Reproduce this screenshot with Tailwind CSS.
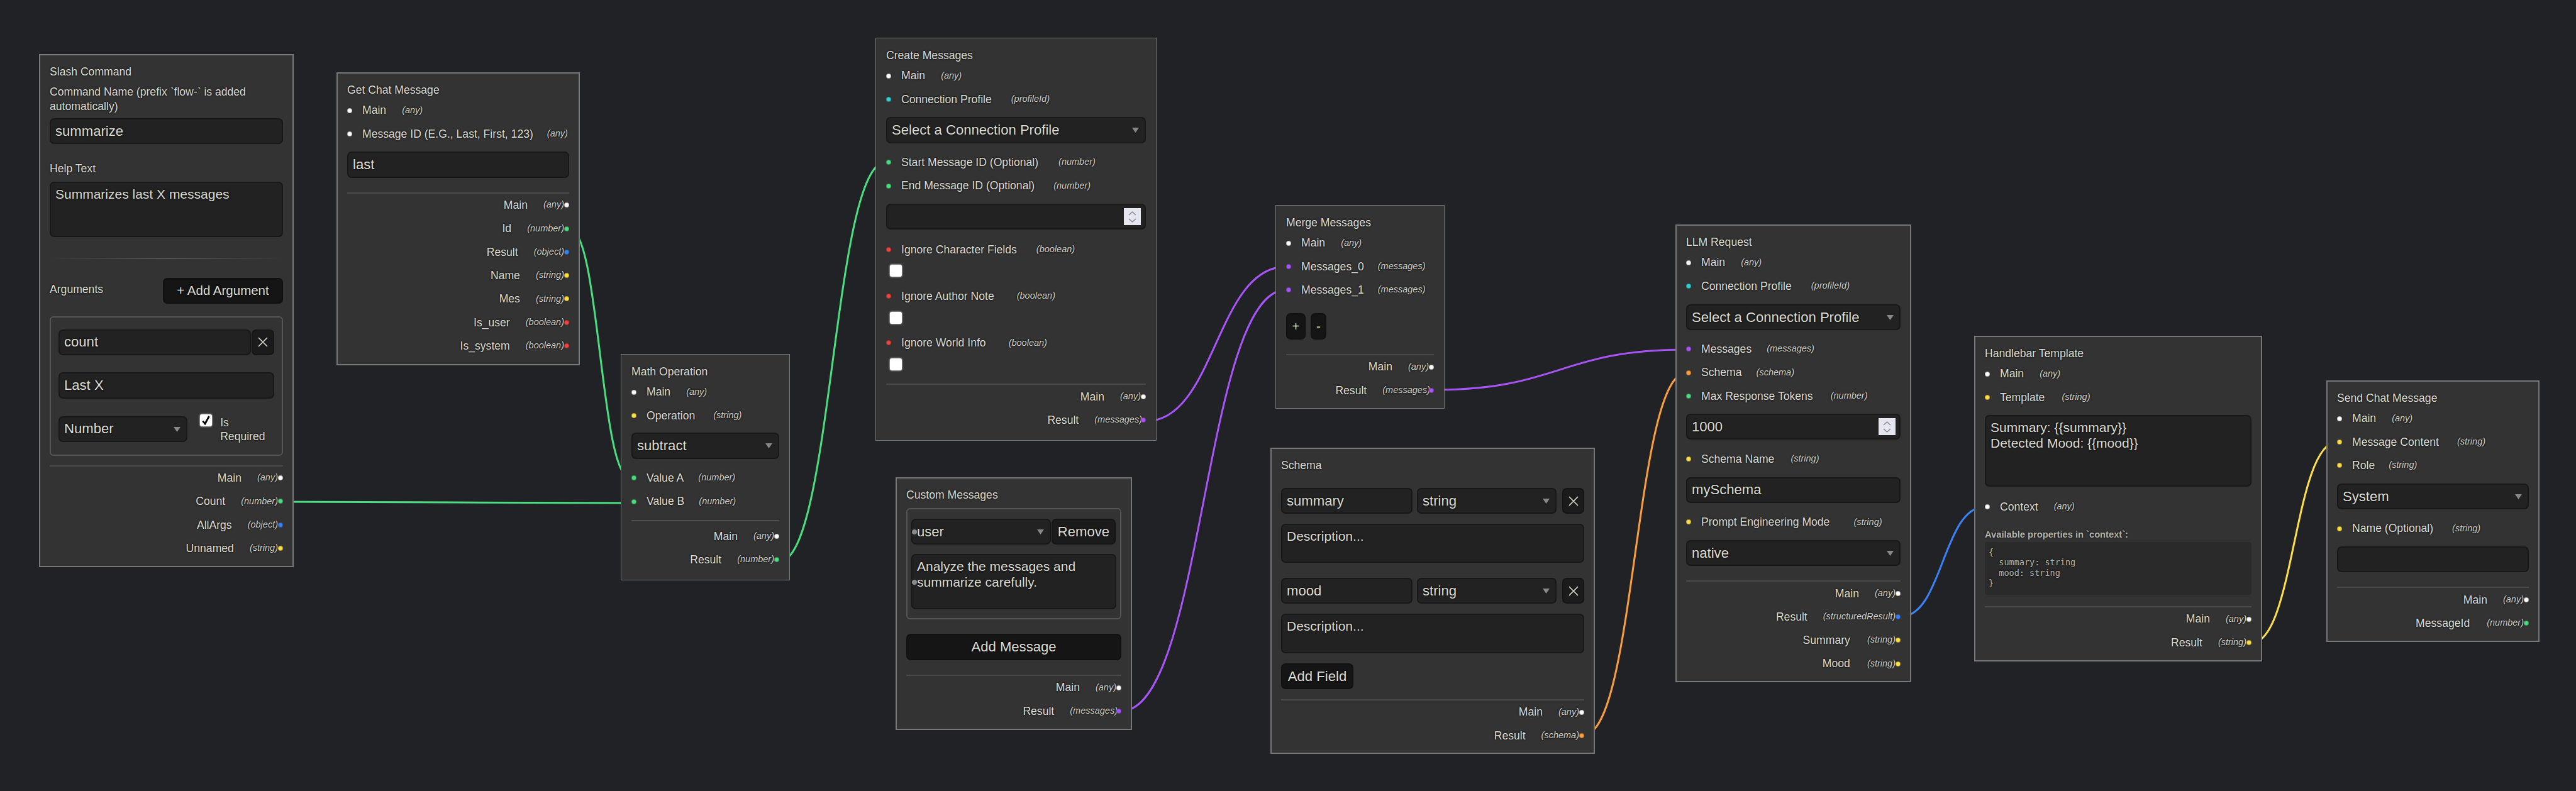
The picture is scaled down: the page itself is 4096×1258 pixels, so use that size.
<!DOCTYPE html>
<html lang="en">
<head>
    <meta charset="UTF-8">
    <title>Flow Editor</title>
    <script src="https://cdn.jsdelivr.net/npm/@tailwindcss/browser@4"></script>
</head>
<body class="overflow-hidden">
<div class="relative w-[4096px] h-[1258px] overflow-hidden bg-[#202226] text-[#dcdcd2] text-[17.6px] whitespace-nowrap font-['Liberation_Sans',sans-serif] [text-shadow:0_0_3px_#000] [&_:is(input,textarea,select,button)]:[text-shadow:0_0_3px_#000]">

    <!-- Edges -->
    <svg class="absolute inset-0 w-[4096px] h-[1258px]" viewBox="0 0 4096 1258" fill="none" stroke-width="3">
        <path stroke="#4ade80" d="M450 798 C726 798 726 800 1003 800"/>
        <path stroke="#4ade80" d="M905 363 C954 363 954 762 1003 762"/>
        <path stroke="#4ade80" d="M1239 893 C1324 893 1324 257 1409 257"/>
        <path stroke="#a855f7" d="M1822 670 C1933 670 1933 424 2045 424"/>
        <path stroke="#a855f7" d="M1783 1131 C1914 1131 1914 461 2045 461"/>
        <path stroke="#a855f7" d="M2280 620 C2480 620 2480 556 2681 556"/>
        <path stroke="#fb9f3c" d="M2519 1168 C2600 1168 2600 593 2681 593"/>
        <path stroke="#3b82f6" d="M3022 981 C3089 981 3089 806 3156 806"/>
        <path stroke="#fde047" d="M3581 1022 C3648 1022 3648 703 3716 703"/>
    </svg>

    <!-- Slash Command -->
    <div class="absolute left-[62px] top-[86px] w-[405px] h-[816px] bg-[#333] border-2 border-[#777] px-[15px] pt-[14px]">
        <div class="h-[24px] leading-[24px]">Slash Command</div>
        <label class="block mt-[9px] leading-[22.5px] whitespace-normal">Command Name (prefix `flow-` is added automatically)</label>
        <input value="summarize" class="block w-full h-[41px] mt-[8px] px-[7px] bg-[#222] border-2 border-[#181818] rounded-[7px] text-[22.1px]">
        <label class="block mt-[28px] leading-[22.5px]">Help Text</label>
        <textarea class="block w-full h-[88px] mt-[9px] px-[7px] py-[5px] bg-[#222] border-2 border-[#181818] rounded-[7px] text-[21px] leading-[25px] resize-none">Summarizes last X messages</textarea>
        <div class="h-[2px] mt-[33px] bg-gradient-to-r from-transparent via-[#555] to-transparent"></div>
        <div class="flex items-center justify-between mt-[30px]">
            <span class="-mt-[4px]">Arguments</span>
            <button class="w-[191px] h-[41px] bg-[#151515] border-2 border-[#111] rounded-[7px] text-[20.5px]">+ Add Argument</button>
        </div>
        <div class="mt-[20px] px-[12px] pt-[19px] pb-[18px] border-2 border-[#555] rounded-[6px]">
            <div class="flex gap-[1px]">
                <input value="count" class="w-[307px] h-[41px] px-[7px] bg-[#222] border-2 border-[#181818] rounded-[7px] text-[22.1px]">
                <button class="flex items-center justify-center w-[36px] h-[41px] bg-[#1b1b1b] border-2 border-[#151515] rounded-[7px]">
                    <svg class="w-[16px] h-[16px]" viewBox="0 0 16 16" stroke="#dcdcd2" stroke-width="1.6"><path d="M1 1 L15 15 M15 1 L1 15"/></svg>
                </button>
            </div>
            <input value="Last X" class="block w-full h-[42px] mt-[27px] px-[7px] bg-[#222] border-2 border-[#181818] rounded-[7px] text-[22.1px]">
            <div class="flex items-start mt-[28px]">
                <div class="relative w-[215px]">
                    <select class="block w-full h-[41px] px-[7px] appearance-none bg-[#222] border-2 border-[#181818] rounded-[7px] text-[22.1px]"><option>Number</option></select>
                    <svg class="absolute right-[11px] top-[17px] w-[11px] h-[8px]" viewBox="0 0 11 8" fill="#888"><path d="M0 0 H11 L5.5 8 Z"/></svg>
                </div>
                <span class="relative w-[19px] h-[19px] ml-[20px] -mt-[3px] shrink-0 bg-white rounded-[3px] shadow-[0_0_3px_#fff]">
                    <svg class="absolute left-[3px] top-[2px] w-[13px] h-[15px]" viewBox="0 0 13 15" fill="none" stroke="#000" stroke-width="2.8"><path d="M1.5 8.500 L5 13 L11.500 1"/></svg>
                </span>
                <label class="ml-[13px] -mt-[1px] leading-[22px] whitespace-normal">Is Required</label>
            </div>
        </div>
        <div class="mt-[15px] border-t-2 border-[#4a4a4a]"></div>
        <div class="flex items-center justify-end h-[37.3px]"><span class="mr-[25px]">Main</span><em class="text-[14.5px] text-[#cfcfc6]">(any)</em><span class="w-[8px] h-[8px] shrink-0 rounded-full border border-black/30 bg-white"></span></div>
        <div class="flex items-center justify-end h-[37.3px]"><span class="mr-[25px]">Count</span><em class="text-[14.5px] text-[#cfcfc6]">(number)</em><span class="w-[8px] h-[8px] shrink-0 rounded-full border border-black/30 bg-[#4ade80]"></span></div>
        <div class="flex items-center justify-end h-[37.3px]"><span class="mr-[25px]">AllArgs</span><em class="text-[14.5px] text-[#cfcfc6]">(object)</em><span class="w-[8px] h-[8px] shrink-0 rounded-full border border-black/30 bg-[#3b82f6]"></span></div>
        <div class="flex items-center justify-end h-[37.3px]"><span class="mr-[25px]">Unnamed</span><em class="text-[14.5px] text-[#cfcfc6]">(string)</em><span class="w-[8px] h-[8px] shrink-0 rounded-full border border-black/30 bg-[#fde047]"></span></div>
    </div>

    <!-- Get Chat Message -->
    <div class="absolute left-[535px] top-[115px] w-[387px] h-[466px] bg-[#333] border-2 border-[#777] px-[15px] pt-[14px]">
        <div class="h-[24px] mb-[2px] leading-[24px]">Get Chat Message</div>
        <div class="flex items-center h-[37.3px]"><span class="w-[8px] h-[8px] mr-[16px] shrink-0 rounded-full border border-black/30 bg-white"></span><span class="mr-[25px]">Main</span><em class="text-[14.5px] text-[#cfcfc6]">(any)</em></div>
        <div class="flex items-center h-[37.3px]"><span class="w-[8px] h-[8px] mr-[16px] shrink-0 rounded-full border border-black/30 bg-white"></span><span class="mr-[22px]">Message ID (E.G., Last, First, 123)</span><em class="text-[14.5px] text-[#cfcfc6]">(any)</em></div>
        <input value="last" class="block w-full h-[42px] mt-[9px] px-[7px] bg-[#222] border-2 border-[#181818] rounded-[7px] text-[22.1px]">
        <div class="mt-[23px] border-t-2 border-[#4a4a4a]"></div>
        <div class="flex items-center justify-end h-[37.3px]"><span class="mr-[25px]">Main</span><em class="text-[14.5px] text-[#cfcfc6]">(any)</em><span class="w-[8px] h-[8px] shrink-0 rounded-full border border-black/30 bg-white"></span></div>
        <div class="flex items-center justify-end h-[37.3px]"><span class="mr-[25px]">Id</span><em class="text-[14.5px] text-[#cfcfc6]">(number)</em><span class="w-[8px] h-[8px] shrink-0 rounded-full border border-black/30 bg-[#4ade80]"></span></div>
        <div class="flex items-center justify-end h-[37.3px]"><span class="mr-[25px]">Result</span><em class="text-[14.5px] text-[#cfcfc6]">(object)</em><span class="w-[8px] h-[8px] shrink-0 rounded-full border border-black/30 bg-[#3b82f6]"></span></div>
        <div class="flex items-center justify-end h-[37.3px]"><span class="mr-[25px]">Name</span><em class="text-[14.5px] text-[#cfcfc6]">(string)</em><span class="w-[8px] h-[8px] shrink-0 rounded-full border border-black/30 bg-[#fde047]"></span></div>
        <div class="flex items-center justify-end h-[37.3px]"><span class="mr-[25px]">Mes</span><em class="text-[14.5px] text-[#cfcfc6]">(string)</em><span class="w-[8px] h-[8px] shrink-0 rounded-full border border-black/30 bg-[#fde047]"></span></div>
        <div class="flex items-center justify-end h-[37.3px]"><span class="mr-[25px]">Is_user</span><em class="text-[14.5px] text-[#cfcfc6]">(boolean)</em><span class="w-[8px] h-[8px] shrink-0 rounded-full border border-black/30 bg-[#ef4444]"></span></div>
        <div class="flex items-center justify-end h-[37.3px]"><span class="mr-[25px]">Is_system</span><em class="text-[14.5px] text-[#cfcfc6]">(boolean)</em><span class="w-[8px] h-[8px] shrink-0 rounded-full border border-black/30 bg-[#ef4444]"></span></div>
    </div>

    <!-- Math Operation -->
    <div class="absolute left-[987px] top-[563px] w-[269px] h-[360px] bg-[#333] border border-[#777] px-[16px] pt-[15px]">
        <div class="h-[24px] mb-[2px] leading-[24px]">Math Operation</div>
        <div class="flex items-center h-[37.3px]"><span class="w-[8px] h-[8px] mr-[16px] shrink-0 rounded-full border border-black/30 bg-white"></span><span class="mr-[25px]">Main</span><em class="text-[14.5px] text-[#cfcfc6]">(any)</em></div>
        <div class="flex items-center h-[37.3px]"><span class="w-[8px] h-[8px] mr-[16px] shrink-0 rounded-full border border-black/30 bg-[#fde047]"></span><span class="mr-[29px]">Operation</span><em class="text-[14.5px] text-[#cfcfc6]">(string)</em></div>
        <div class="relative mt-[8px]">
            <select class="block w-full h-[42px] px-[7px] appearance-none bg-[#222] border-2 border-[#181818] rounded-[7px] text-[22.1px]"><option>subtract</option></select>
            <svg class="absolute right-[11px] top-[17px] w-[11px] h-[8px]" viewBox="0 0 11 8" fill="#888"><path d="M0 0 H11 L5.5 8 Z"/></svg>
        </div>
        <div class="flex items-center h-[37.3px] mt-[12px]"><span class="w-[8px] h-[8px] mr-[16px] shrink-0 rounded-full border border-black/30 bg-[#4ade80]"></span><span class="mr-[23px]">Value A</span><em class="text-[14.5px] text-[#cfcfc6]">(number)</em></div>
        <div class="flex items-center h-[37.3px]"><span class="w-[8px] h-[8px] mr-[16px] shrink-0 rounded-full border border-black/30 bg-[#4ade80]"></span><span class="mr-[23px]">Value B</span><em class="text-[14.5px] text-[#cfcfc6]">(number)</em></div>
        <div class="mt-[11px] mb-[6px] border-t border-[#5a5a5a]"></div>
        <div class="flex items-center justify-end h-[37.3px]"><span class="mr-[25px]">Main</span><em class="text-[14.5px] text-[#cfcfc6]">(any)</em><span class="w-[8px] h-[8px] shrink-0 rounded-full border border-black/30 bg-white"></span></div>
        <div class="flex items-center justify-end h-[37.3px]"><span class="mr-[25px]">Result</span><em class="text-[14.5px] text-[#cfcfc6]">(number)</em><span class="w-[8px] h-[8px] shrink-0 rounded-full border border-black/30 bg-[#4ade80]"></span></div>
    </div>

    <!-- Create Messages -->
    <div class="absolute left-[1392px] top-[60px] w-[447px] h-[641px] bg-[#333] border border-[#777] px-[16px] pt-[15px]">
        <div class="h-[24px] mb-[2px] leading-[24px]">Create Messages</div>
        <div class="flex items-center h-[37.3px]"><span class="w-[8px] h-[8px] mr-[16px] shrink-0 rounded-full border border-black/30 bg-white"></span><span class="mr-[25px]">Main</span><em class="text-[14.5px] text-[#cfcfc6]">(any)</em></div>
        <div class="flex items-center h-[37.3px]"><span class="w-[8px] h-[8px] mr-[16px] shrink-0 rounded-full border border-black/30 bg-[#2dd4d4]"></span><span class="mr-[31px]">Connection Profile</span><em class="text-[14.5px] text-[#cfcfc6]">(profileId)</em></div>
        <div class="relative mt-[9px]">
            <select class="block w-full h-[42px] px-[7px] appearance-none bg-[#222] border-2 border-[#181818] rounded-[7px] text-[22.1px]"><option>Select a Connection Profile</option></select>
            <svg class="absolute right-[11px] top-[17px] w-[11px] h-[8px]" viewBox="0 0 11 8" fill="#888"><path d="M0 0 H11 L5.5 8 Z"/></svg>
        </div>
        <div class="flex items-center h-[37.3px] mt-[12px]"><span class="w-[8px] h-[8px] mr-[16px] shrink-0 rounded-full border border-black/30 bg-[#4ade80]"></span><span class="mr-[32px]">Start Message ID (Optional)</span><em class="text-[14.5px] text-[#cfcfc6]">(number)</em></div>
        <div class="flex items-center h-[37.3px]"><span class="w-[8px] h-[8px] mr-[16px] shrink-0 rounded-full border border-black/30 bg-[#4ade80]"></span><span class="mr-[30px]">End Message ID (Optional)</span><em class="text-[14.5px] text-[#cfcfc6]">(number)</em></div>
        <div class="relative mt-[10px]">
            <input class="block w-full h-[41px] px-[7px] bg-[#222] border-2 border-[#181818] rounded-[7px] text-[22.1px]">
            <svg class="absolute right-[8px] top-[7px] w-[27px] h-[27px] bg-[#e6e6ef]" viewBox="0 0 27 27" fill="none" stroke="#8a8a92" stroke-width="1.6"><path d="M8 11 L13.500 6 L19 11 M8 17 L13.500 22 L19 17"/></svg>
        </div>
        <div class="flex items-center h-[37.3px] mt-[13px]"><span class="w-[8px] h-[8px] mr-[16px] shrink-0 rounded-full border border-black/30 bg-[#ef4444]"></span><span class="mr-[31px]">Ignore Character Fields</span><em class="text-[14.5px] text-[#cfcfc6]">(boolean)</em></div>
        <input type="checkbox" class="block w-[19px] h-[19px] mt-[6px] ml-[6px] appearance-none bg-white rounded-[3px] shadow-[0_0_3px_#fff]">
        <div class="flex items-center h-[37.3px] mt-[12px]"><span class="w-[8px] h-[8px] mr-[16px] shrink-0 rounded-full border border-black/30 bg-[#ef4444]"></span><span class="mr-[36px]">Ignore Author Note</span><em class="text-[14.5px] text-[#cfcfc6]">(boolean)</em></div>
        <input type="checkbox" class="block w-[19px] h-[19px] mt-[6px] ml-[6px] appearance-none bg-white rounded-[3px] shadow-[0_0_3px_#fff]">
        <div class="flex items-center h-[37.3px] mt-[12px]"><span class="w-[8px] h-[8px] mr-[16px] shrink-0 rounded-full border border-black/30 bg-[#ef4444]"></span><span class="mr-[36px]">Ignore World Info</span><em class="text-[14.5px] text-[#cfcfc6]">(boolean)</em></div>
        <input type="checkbox" class="block w-[19px] h-[19px] mt-[6px] ml-[6px] appearance-none bg-white rounded-[3px] shadow-[0_0_3px_#fff]">
        <div class="mt-[21px] border-t-2 border-[#4a4a4a]"></div>
        <div class="flex items-center justify-end h-[37.3px]"><span class="mr-[25px]">Main</span><em class="text-[14.5px] text-[#cfcfc6]">(any)</em><span class="w-[8px] h-[8px] shrink-0 rounded-full border border-black/30 bg-white"></span></div>
        <div class="flex items-center justify-end h-[37.3px]"><span class="mr-[25px]">Result</span><em class="text-[14.5px] text-[#cfcfc6]">(messages)</em><span class="w-[8px] h-[8px] -ml-[2px] shrink-0 rounded-full border border-black/30 bg-[#a855f7]"></span></div>
    </div>

    <!-- Custom Messages -->
    <div class="absolute left-[1424px] top-[759px] w-[376px] h-[402px] bg-[#333] border-2 border-[#777] px-[15px] pt-[14px]">
        <div class="h-[24px] leading-[24px]">Custom Messages</div>
        <div class="mt-[9px] px-[6px] pt-[15px] pb-[14px] border-2 border-[#555] rounded-[6px]">
            <div class="flex gap-[1px]">
                <div class="relative w-[222px]">
                    <select class="block w-full h-[41px] px-[7px] appearance-none bg-[#222] border-2 border-[#181818] rounded-[7px] text-[22.1px]"><option>user</option></select>
                    <svg class="absolute right-[11px] top-[17px] w-[11px] h-[8px]" viewBox="0 0 11 8" fill="#888"><path d="M0 0 H11 L5.5 8 Z"/></svg>
                    <span class="absolute left-[1px] top-[17px] w-[8px] h-[8px] rounded-full bg-[#8a8a8a]"></span>
                </div>
                <button class="w-[102px] h-[41px] bg-[#1b1b1b] border-2 border-[#151515] rounded-[7px] text-[22.1px]">Remove</button>
            </div>
            <div class="relative mt-[15px]">
                <textarea class="block w-full h-[88px] px-[7px] py-[5px] bg-[#222] border-2 border-[#181818] rounded-[7px] text-[21px] leading-[25px] resize-none">Analyze the messages and summarize carefully.</textarea>
                <span class="absolute left-[1px] top-[41px] w-[8px] h-[8px] rounded-full bg-[#8a8a8a]"></span>
            </div>
        </div>
        <button class="block w-full h-[42px] mt-[23px] bg-[#151515] border-2 border-[#111] rounded-[7px] text-[22.1px]">Add Message</button>
        <div class="mt-[23px] border-t-2 border-[#4a4a4a]"></div>
        <div class="flex items-center justify-end h-[37.3px]"><span class="mr-[25px]">Main</span><em class="text-[14.5px] text-[#cfcfc6]">(any)</em><span class="w-[8px] h-[8px] shrink-0 rounded-full border border-black/30 bg-white"></span></div>
        <div class="flex items-center justify-end h-[37.3px]"><span class="mr-[25px]">Result</span><em class="text-[14.5px] text-[#cfcfc6]">(messages)</em><span class="w-[8px] h-[8px] -ml-[2px] shrink-0 rounded-full border border-black/30 bg-[#a855f7]"></span></div>
    </div>

    <!-- Merge Messages -->
    <div class="absolute left-[2028px] top-[326px] w-[269px] h-[324px] bg-[#333] border border-[#777] px-[16px] pt-[15px]">
        <div class="h-[24px] mb-[2px] leading-[24px]">Merge Messages</div>
        <div class="flex items-center h-[37.3px]"><span class="w-[8px] h-[8px] mr-[16px] shrink-0 rounded-full border border-black/30 bg-white"></span><span class="mr-[25px]">Main</span><em class="text-[14.5px] text-[#cfcfc6]">(any)</em></div>
        <div class="flex items-center h-[37.3px]"><span class="w-[8px] h-[8px] mr-[16px] shrink-0 rounded-full border border-black/30 bg-[#a855f7]"></span><span class="mr-[22px]">Messages_0</span><em class="text-[14.5px] text-[#cfcfc6]">(messages)</em></div>
        <div class="flex items-center h-[37.3px]"><span class="w-[8px] h-[8px] mr-[16px] shrink-0 rounded-full border border-black/30 bg-[#a855f7]"></span><span class="mr-[22px]">Messages_1</span><em class="text-[14.5px] text-[#cfcfc6]">(messages)</em></div>
        <div class="flex gap-[8px] mt-[18px]">
            <button class="w-[31px] h-[42px] bg-[#151515] border-2 border-[#111] rounded-[7px] text-[20.5px]">+</button>
            <button class="w-[25px] h-[42px] bg-[#151515] border-2 border-[#111] rounded-[7px] text-[20.5px]">-</button>
        </div>
        <div class="mt-[23px] border-t-2 border-[#4a4a4a]"></div>
        <div class="flex items-center justify-end h-[37.3px]"><span class="mr-[25px]">Main</span><em class="text-[14.5px] text-[#cfcfc6]">(any)</em><span class="w-[8px] h-[8px] shrink-0 rounded-full border border-black/30 bg-white"></span></div>
        <div class="flex items-center justify-end h-[37.3px]"><span class="mr-[25px]">Result</span><em class="text-[14.5px] text-[#cfcfc6]">(messages)</em><span class="w-[8px] h-[8px] -ml-[2px] shrink-0 rounded-full border border-black/30 bg-[#a855f7]"></span></div>
    </div>

    <!-- Schema -->
    <div class="absolute left-[2020px] top-[712px] w-[516px] h-[487px] bg-[#333] border-2 border-[#777] px-[15px] pt-[14px]">
        <div class="h-[24px] leading-[24px]">Schema</div>
        <div class="flex mt-[24px]">
            <input value="summary" class="w-[209px] h-[41px] px-[7px] bg-[#222] border-2 border-[#181818] rounded-[7px] text-[22.1px]">
            <div class="relative w-[222px] ml-[7px]">
                <select class="block w-full h-[41px] px-[7px] appearance-none bg-[#222] border-2 border-[#181818] rounded-[7px] text-[22.1px]"><option>string</option></select>
                <svg class="absolute right-[11px] top-[17px] w-[11px] h-[8px]" viewBox="0 0 11 8" fill="#888"><path d="M0 0 H11 L5.5 8 Z"/></svg>
            </div>
            <button class="flex items-center justify-center w-[35px] h-[41px] ml-[9px] bg-[#1b1b1b] border-2 border-[#151515] rounded-[7px]">
                <svg class="w-[16px] h-[16px]" viewBox="0 0 16 16" stroke="#dcdcd2" stroke-width="1.6"><path d="M1 1 L15 15 M15 1 L1 15"/></svg>
            </button>
        </div>
        <textarea class="block w-full h-[62px] mt-[16px] px-[7px] py-[5px] bg-[#222] border-2 border-[#181818] rounded-[7px] text-[21px] leading-[25px] resize-none placeholder:text-[#dcdcd2]" placeholder="Description..."></textarea>
        <div class="flex mt-[24px]">
            <input value="mood" class="w-[209px] h-[41px] px-[7px] bg-[#222] border-2 border-[#181818] rounded-[7px] text-[22.1px]">
            <div class="relative w-[222px] ml-[7px]">
                <select class="block w-full h-[41px] px-[7px] appearance-none bg-[#222] border-2 border-[#181818] rounded-[7px] text-[22.1px]"><option>string</option></select>
                <svg class="absolute right-[11px] top-[17px] w-[11px] h-[8px]" viewBox="0 0 11 8" fill="#888"><path d="M0 0 H11 L5.5 8 Z"/></svg>
            </div>
            <button class="flex items-center justify-center w-[35px] h-[41px] ml-[9px] bg-[#1b1b1b] border-2 border-[#151515] rounded-[7px]">
                <svg class="w-[16px] h-[16px]" viewBox="0 0 16 16" stroke="#dcdcd2" stroke-width="1.6"><path d="M1 1 L15 15 M15 1 L1 15"/></svg>
            </button>
        </div>
        <textarea class="block w-full h-[63px] mt-[16px] px-[7px] py-[5px] bg-[#222] border-2 border-[#181818] rounded-[7px] text-[21px] leading-[25px] resize-none placeholder:text-[#dcdcd2]" placeholder="Description..."></textarea>
        <button class="block w-[115px] h-[41px] mt-[16px] bg-[#151515] border-2 border-[#111] rounded-[7px] text-[22.1px]">Add Field</button>
        <div class="mt-[16px] border-t-2 border-[#4a4a4a]"></div>
        <div class="flex items-center justify-end h-[37.3px]"><span class="mr-[25px]">Main</span><em class="text-[14.5px] text-[#cfcfc6]">(any)</em><span class="w-[8px] h-[8px] shrink-0 rounded-full border border-black/30 bg-white"></span></div>
        <div class="flex items-center justify-end h-[37.3px]"><span class="mr-[25px]">Result</span><em class="text-[14.5px] text-[#cfcfc6]">(schema)</em><span class="w-[8px] h-[8px] shrink-0 rounded-full border border-black/30 bg-[#fb9f3c]"></span></div>
    </div>

    <!-- LLM Request -->
    <div class="absolute left-[2664px] top-[357px] w-[375px] h-[728px] bg-[#333] border-2 border-[#777] px-[15px] pt-[14px]">
        <div class="h-[24px] mb-[2px] leading-[24px]">LLM Request</div>
        <div class="flex items-center h-[37.3px]"><span class="w-[8px] h-[8px] mr-[16px] shrink-0 rounded-full border border-black/30 bg-white"></span><span class="mr-[25px]">Main</span><em class="text-[14.5px] text-[#cfcfc6]">(any)</em></div>
        <div class="flex items-center h-[37.3px]"><span class="w-[8px] h-[8px] mr-[16px] shrink-0 rounded-full border border-black/30 bg-[#2dd4d4]"></span><span class="mr-[31px]">Connection Profile</span><em class="text-[14.5px] text-[#cfcfc6]">(profileId)</em></div>
        <div class="relative mt-[10px]">
            <select class="block w-full h-[41px] px-[7px] appearance-none bg-[#222] border-2 border-[#181818] rounded-[7px] text-[22.1px]"><option>Select a Connection Profile</option></select>
            <svg class="absolute right-[11px] top-[17px] w-[11px] h-[8px]" viewBox="0 0 11 8" fill="#888"><path d="M0 0 H11 L5.5 8 Z"/></svg>
        </div>
        <div class="flex items-center h-[37.3px] mt-[12px]"><span class="w-[8px] h-[8px] mr-[16px] shrink-0 rounded-full border border-black/30 bg-[#a855f7]"></span><span class="mr-[24px]">Messages</span><em class="text-[14.5px] text-[#cfcfc6]">(messages)</em></div>
        <div class="flex items-center h-[37.3px]"><span class="w-[8px] h-[8px] mr-[16px] shrink-0 rounded-full border border-black/30 bg-[#fb9f3c]"></span><span class="mr-[23px]">Schema</span><em class="text-[14.5px] text-[#cfcfc6]">(schema)</em></div>
        <div class="flex items-center h-[37.3px]"><span class="w-[8px] h-[8px] mr-[16px] shrink-0 rounded-full border border-black/30 bg-[#4ade80]"></span><span class="mr-[28px]">Max Response Tokens</span><em class="text-[14.5px] text-[#cfcfc6]">(number)</em></div>
        <div class="relative mt-[10px]">
            <input value="1000" class="block w-full h-[41px] px-[7px] bg-[#222] border-2 border-[#181818] rounded-[7px] text-[22.1px]">
            <svg class="absolute right-[8px] top-[7px] w-[27px] h-[27px] bg-[#e6e6ef]" viewBox="0 0 27 27" fill="none" stroke="#8a8a92" stroke-width="1.6"><path d="M8 11 L13.500 6 L19 11 M8 17 L13.500 22 L19 17"/></svg>
        </div>
        <div class="flex items-center h-[37.3px] mt-[12px]"><span class="w-[8px] h-[8px] mr-[16px] shrink-0 rounded-full border border-black/30 bg-[#fde047]"></span><span class="mr-[26px]">Schema Name</span><em class="text-[14.5px] text-[#cfcfc6]">(string)</em></div>
        <input value="mySchema" class="block w-full h-[41px] mt-[10px] px-[7px] bg-[#222] border-2 border-[#181818] rounded-[7px] text-[22.1px]">
        <div class="flex items-center h-[37.3px] mt-[12px]"><span class="w-[8px] h-[8px] mr-[16px] shrink-0 rounded-full border border-black/30 bg-[#fde047]"></span><span class="mr-[38px]">Prompt Engineering Mode</span><em class="text-[14.5px] text-[#cfcfc6]">(string)</em></div>
        <div class="relative mt-[10px]">
            <select class="block w-full h-[41px] px-[7px] appearance-none bg-[#222] border-2 border-[#181818] rounded-[7px] text-[22.1px]"><option>native</option></select>
            <svg class="absolute right-[11px] top-[17px] w-[11px] h-[8px]" viewBox="0 0 11 8" fill="#888"><path d="M0 0 H11 L5.5 8 Z"/></svg>
        </div>
        <div class="mt-[23px] border-t-2 border-[#4a4a4a]"></div>
        <div class="flex items-center justify-end h-[37.3px]"><span class="mr-[25px]">Main</span><em class="text-[14.5px] text-[#cfcfc6]">(any)</em><span class="w-[8px] h-[8px] shrink-0 rounded-full border border-black/30 bg-white"></span></div>
        <div class="flex items-center justify-end h-[37.3px]"><span class="mr-[25px]">Result</span><em class="text-[14.5px] text-[#cfcfc6]">(structuredResult)</em><span class="w-[8px] h-[8px] shrink-0 rounded-full border border-black/30 bg-[#3b82f6]"></span></div>
        <div class="flex items-center justify-end h-[37.3px]"><span class="mr-[27px]">Summary</span><em class="text-[14.5px] text-[#cfcfc6]">(string)</em><span class="w-[8px] h-[8px] shrink-0 rounded-full border border-black/30 bg-[#fde047]"></span></div>
        <div class="flex items-center justify-end h-[37.3px]"><span class="mr-[27px]">Mood</span><em class="text-[14.5px] text-[#cfcfc6]">(string)</em><span class="w-[8px] h-[8px] shrink-0 rounded-full border border-black/30 bg-[#fde047]"></span></div>
    </div>

    <!-- Handlebar Template -->
    <div class="absolute left-[3139px] top-[534px] w-[458px] h-[518px] bg-[#333] border-2 border-[#777] px-[15px] pt-[14px]">
        <div class="h-[24px] mb-[2px] leading-[24px]">Handlebar Template</div>
        <div class="flex items-center h-[37.3px]"><span class="w-[8px] h-[8px] mr-[16px] shrink-0 rounded-full border border-black/30 bg-white"></span><span class="mr-[25px]">Main</span><em class="text-[14.5px] text-[#cfcfc6]">(any)</em></div>
        <div class="flex items-center h-[37.3px]"><span class="w-[8px] h-[8px] mr-[16px] shrink-0 rounded-full border border-black/30 bg-[#fde047]"></span><span class="mr-[27px]">Template</span><em class="text-[14.5px] text-[#cfcfc6]">(string)</em></div>
        <textarea class="block w-full h-[114px] mt-[9px] px-[7px] py-[5px] bg-[#222] border-2 border-[#181818] rounded-[7px] text-[21px] leading-[25px] resize-none">Summary: {{summary}}
Detected Mood: {{mood}}</textarea>
        <div class="flex items-center h-[37.3px] mt-[14px]"><span class="w-[8px] h-[8px] mr-[16px] shrink-0 rounded-full border border-black/30 bg-white"></span><span class="mr-[25px]">Context</span><em class="text-[14.5px] text-[#cfcfc6]">(any)</em></div>
        <div class="mt-[16px] h-[18px] leading-[18px] text-[14.7px] font-bold text-[#b5b5ad]">Available properties in `context`:</div>
        <pre class="h-[84px] mt-[3px] px-[6px] pt-[8px] bg-[#2a2a2a] rounded-[4px] text-[13.5px] leading-[16.5px] text-[#b5b5ad] font-['DejaVu_Sans_Mono',monospace]">{
  summary: string
  mood: string
}</pre>
        <div class="mt-[18px] border-t-2 border-[#4a4a4a]"></div>
        <div class="flex items-center justify-end h-[37.3px]"><span class="mr-[25px]">Main</span><em class="text-[14.5px] text-[#cfcfc6]">(any)</em><span class="w-[8px] h-[8px] shrink-0 rounded-full border border-black/30 bg-white"></span></div>
        <div class="flex items-center justify-end h-[37.3px]"><span class="mr-[25px]">Result</span><em class="text-[14.5px] text-[#cfcfc6]">(string)</em><span class="w-[8px] h-[8px] shrink-0 rounded-full border border-black/30 bg-[#fde047]"></span></div>
    </div>

    <!-- Send Chat Message -->
    <div class="absolute left-[3699px] top-[605px] w-[339px] h-[416px] bg-[#333] border-2 border-[#777] px-[15px] pt-[14px]">
        <div class="h-[24px] mb-[2px] leading-[24px]">Send Chat Message</div>
        <div class="flex items-center h-[37.3px]"><span class="w-[8px] h-[8px] mr-[16px] shrink-0 rounded-full border border-black/30 bg-white"></span><span class="mr-[25px]">Main</span><em class="text-[14.5px] text-[#cfcfc6]">(any)</em></div>
        <div class="flex items-center h-[37.3px]"><span class="w-[8px] h-[8px] mr-[16px] shrink-0 rounded-full border border-black/30 bg-[#fde047]"></span><span class="mr-[29px]">Message Content</span><em class="text-[14.5px] text-[#cfcfc6]">(string)</em></div>
        <div class="flex items-center h-[37.3px]"><span class="w-[8px] h-[8px] mr-[16px] shrink-0 rounded-full border border-black/30 bg-[#fde047]"></span><span class="mr-[22px]">Role</span><em class="text-[14.5px] text-[#cfcfc6]">(string)</em></div>
        <div class="relative mt-[10px]">
            <select class="block w-full h-[41px] px-[7px] appearance-none bg-[#222] border-2 border-[#181818] rounded-[7px] text-[22.1px]"><option>System</option></select>
            <svg class="absolute right-[11px] top-[17px] w-[11px] h-[8px]" viewBox="0 0 11 8" fill="#888"><path d="M0 0 H11 L5.5 8 Z"/></svg>
        </div>
        <div class="flex items-center h-[37.3px] mt-[12px]"><span class="w-[8px] h-[8px] mr-[16px] shrink-0 rounded-full border border-black/30 bg-[#fde047]"></span><span class="mr-[30px]">Name (Optional)</span><em class="text-[14.5px] text-[#cfcfc6]">(string)</em></div>
        <input class="block w-full h-[41px] mt-[10px] px-[7px] bg-[#222] border-2 border-[#181818] rounded-[7px] text-[22.1px]">
        <div class="mt-[23px] border-t-2 border-[#4a4a4a]"></div>
        <div class="flex items-center justify-end h-[37.3px]"><span class="mr-[25px]">Main</span><em class="text-[14.5px] text-[#cfcfc6]">(any)</em><span class="w-[8px] h-[8px] shrink-0 rounded-full border border-black/30 bg-white"></span></div>
        <div class="flex items-center justify-end h-[37.3px]"><span class="mr-[27px]">MessageId</span><em class="text-[14.5px] text-[#cfcfc6]">(number)</em><span class="w-[8px] h-[8px] shrink-0 rounded-full border border-black/30 bg-[#4ade80]"></span></div>
    </div>
</div>
</body>
</html>
